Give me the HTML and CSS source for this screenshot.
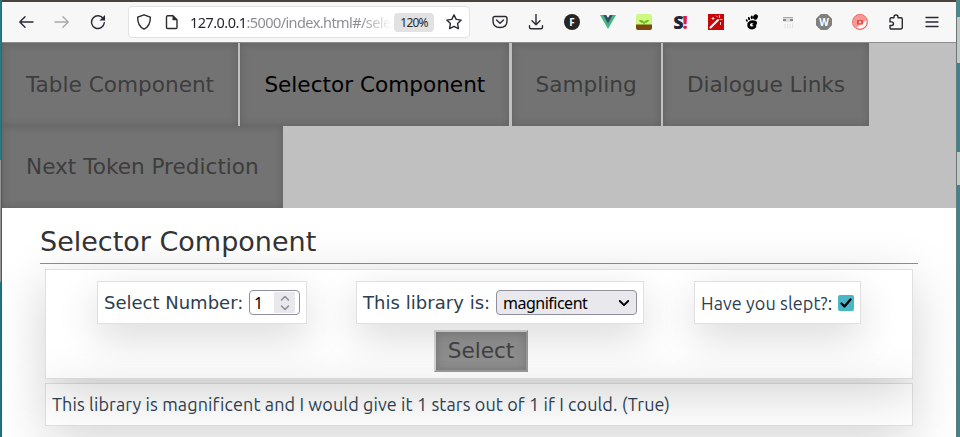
FILE: index.html
```html
<!DOCTYPE html>
<html lang="en">
<head>
<meta charset="utf-8">
<title>Selector Component</title>
<link rel="stylesheet" href="styles.css">
</head>
<body>
<div class="edge edge-left"></div>
<div class="window">
  <header class="toolbar">
    <div class="history">
      <svg width="16" height="16" viewBox="0 0 16 16"><path d="M15 8H2M7 2.800L1.800 8 7 13.200"/></svg>
      <svg class="dim" width="16" height="16" viewBox="0 0 16 16"><path d="M1 8h13M9 2.800L14.200 8 9 13.200"/></svg>
      <svg width="16" height="16" viewBox="0 0 16 16"><path d="M13.400 4.800A6.400 6.400 0 1 0 14.300 8.800"/><path class="solid" d="M15 1v5.500H9.500z"/></svg>
    </div>
    <div class="address">
      <svg class="shield" width="16" height="16" viewBox="0 0 16 16"><path d="M8 .8L14.300 3.200C14.500 8.500 12.600 12.800 8 15.200 3.400 12.800 1.500 8.500 1.700 3.200z"/></svg>
      <svg class="page-icon" width="16" height="16" viewBox="0 0 16 16"><path d="M3.500 1.700h5.500l4 4v7.600q0 1.200-1.200 1.200H3.700q-1.200 0-1.200-1.200V2.900q0-1.200 1.200-1.200z"/><path class="solid" d="M8.500 1.500v4.800h4.800z"/></svg>
      <div class="url"><b>127.0.0.1</b>:5000/index.html#/sele</div>
      <span class="zoom">120%</span>
      <svg class="star" width="16" height="16" viewBox="0 0 16 16"><path d="M8 .9l2.200 4.500 5 .7-3.600 3.500.8 5L8 12.300l-4.400 2.300.8-5L.8 6.100l5-.7z"/></svg>
    </div>
    <div class="extensions">
      <svg width="16" height="16" viewBox="0 0 16 16"><path d="M3 2.500h10q2 0 2 2V7q0 6.500-7 6.500T1 7V4.500q0-2 2-2z"/><path d="M4.500 6L8 9.300 11.500 6"/></svg>
      <svg width="16" height="16" viewBox="0 0 16 16"><path d="M8 .5v10M4 6.800l4 4 4-4M1.500 11.800v1.500q0 1.500 1.500 1.500h10q1.500 0 1.500-1.500v-1.500"/></svg>
      <span class="disc">F</span>
      <svg width="16" height="16" viewBox="0 0 16 16"><path fill="#41b883" stroke="none" d="M0 1h3.500L8 8.700 12.500 1H16L8 15z"/><path fill="#34495e" stroke="none" d="M3.200 1h3L8 4.100 9.800 1h3L8 9.400z"/></svg>
      <svg width="16" height="16" viewBox="0 0 16 16"><rect width="16" height="16" rx="2" fill="#cdf982" stroke="none"/><path fill="#7b4813" stroke="none" d="M0 10.500h16V14q0 2-2 2H2q-2 0-2-2z"/><path fill="#69b51c" stroke="none" d="M3 6q4-.5 5 2 2-2.500 5-2-1 3-4.300 2.800V11H7.300V8.800Q4 9 3 6z"/></svg>
      <span class="script">S<i>!</i></span>
      <svg width="16" height="16" viewBox="0 0 16 16"><rect width="16" height="16" fill="#c80808" stroke="none"/><path stroke="#fff" stroke-width="2" d="M2.500 13.500l7.500-7.500"/><path stroke="#ffd6d6" stroke-width="1" d="M5 3.500v2M4 4.500h2M11.500 1.500v2M12.500 8.500v2M12 5.500h2M9 2.500l-.5-.5"/></svg>
      <svg width="16" height="16" viewBox="0 0 16 16"><g fill="#000" stroke="none"><ellipse cx="11.500" cy="3" rx="2.300" ry="2.800" transform="rotate(25 11.500 3)"/><ellipse cx="7.800" cy="3.300" rx="1.100" ry="1.900"/><ellipse cx="5" cy="4.600" rx="1" ry="1.600" transform="rotate(-20 5 4.600)"/><ellipse cx="2.800" cy="6.500" rx=".9" ry="1.300" transform="rotate(-30 2.800 6.500)"/></g><path stroke="#000" stroke-width="2.800" d="M9.700 10.300q3-.5 1.500-2.300Q7 6.700 4.800 9.500 4 14 8 14q2.500-.2 3-1.800"/></svg>
      <svg width="16" height="16" viewBox="0 0 16 16"><g stroke="none"><path fill="#aaa" d="M3 3h10v1H3z"/><path fill="#ddd" d="M3 4h10v4H3z"/><path fill="#888" d="M3 5h3v2H3zM10 5h3v2h-3z"/></g><path stroke="#e2e2e2" stroke-width="1" d="M5 10v4M7.500 10v4M10 10v4M12.500 10v4"/></svg>
      <span class="octagon">W</span>
      <svg width="16" height="16" viewBox="0 0 16 16"><circle cx="8" cy="8" r="7.300" fill="#fff" stroke="#ee5b56" stroke-width="1.200"/><path fill="#f49a96" stroke="none" d="M1 8a7 7 0 0 1 13.500-2.500L10 10 4 14Q1 12 1 8z"/><path fill="#ec5049" stroke="none" d="M5 6h6v4.500H5z"/><circle cx="8" cy="8.200" r="1" fill="#fff" stroke="none"/></svg>
      <svg width="16" height="16" viewBox="0 0 16 16"><path d="M2 5.200q0-1.400 1.400-1.400H6V3q0-2 2-2t2 2v.8h3q1.300 0 1.300 1.400v8.400q0 1.400-1.300 1.400H3.400Q2 15 2 13.600V11.500h1.500q2 0 2-1.800t-2-1.800H2z"/></svg>
      <svg width="16" height="16" viewBox="0 0 16 16"><path d="M2 3.500h12M2 8h12M2 12.500h12"/></svg>
    </div>
  </header>
  <nav class="tabs">
    <a class="tab">Table Component</a>
    <a class="tab active">Selector Component</a>
    <a class="tab">Sampling</a>
    <a class="tab">Dialogue Links</a>
    <a class="tab last">Next Token Prediction</a>
  </nav>
  <main class="content">
    <h1>Selector Component</h1>
    <section class="card form">
      <div class="fields">
        <label class="card field">Select Number:
          <span class="number">1<span class="spinner"><svg width="12" height="18" viewBox="0 0 12 18"><path d="M2.500 6L6 2.500 9.500 6M2.500 12L6 15.500 9.500 12"/></svg></span></span>
        </label>
        <label class="card field library">This library is:
          <span class="select">magnificent<svg width="12" height="12" viewBox="0 0 12 12"><path d="M1.800 4L6 8.200 10.200 4"/></svg></span>
        </label>
        <label class="card field humanist">Have you slept?:
          <span class="check"><svg width="16" height="16" viewBox="0 0 16 16"><path d="M3.500 8.500l3 3L12.500 4.500"/></svg></span>
        </label>
      </div>
      <button class="submit">Select</button>
    </section>
    <section class="card result"><span>This library is magnificent and I would give it 1 stars out of 1 if I could. (True)</span></section>
  </main>
</div>
<div class="edge edge-right"></div>
</body>
</html>
```
FILE: styles.css
```css
* { box-sizing: border-box; }
body { margin: 0; width: 960px; height: 437px; overflow: hidden; display: flex; background: #fff; font-family: "DejaVu Sans", sans-serif; }
svg { display: block; flex: none; fill: none; stroke: #2b2a33; stroke-width: 1.4; stroke-linecap: round; stroke-linejoin: round; }
.solid { fill: #2b2a33; stroke: none; }
.edge { flex: none; height: 437px; }
.edge-left { width: 2px; background: linear-gradient(#257b86 160px, #969696 160px 282px, #1e727d 282px); border-right: 1px solid #33646b; }
.edge-right { width: 4px; border-left: 1px solid #68787a; background: linear-gradient(#389099 17px, #c8c6c3 17px 63px, #35888f 63px 152px, #c8c6c3 152px 185px, #35888f 185px); }
.window { width: 954px; height: 437px; overflow: hidden; border-top: 2px solid #4b423d; }

.toolbar { height: 41px; display: flex; align-items: center; background: #f7f7f7; border-bottom: 1px solid #8c8c8c; padding: 0 16px; }
.history { display: flex; flex: none; gap: 20px; width: 110px; }
.dim { opacity: .38; }
.address { width: 342px; height: 32px; flex: none; display: flex; align-items: center; padding: 0 7px; background: #fff; border: 1px solid #e2e2e2; border-radius: 4px; }
.page-icon { margin-left: 12px; }
.url { width: 200px; margin-left: 10px; flex: none; white-space: nowrap; font: 14.500px "Noto Sans", sans-serif; letter-spacing: -.58px; color: #8e8e92; -webkit-mask-image: linear-gradient(90deg, #000 170px, transparent 202px); mask-image: linear-gradient(90deg, #000 170px, transparent 202px); }
.url b { font-weight: 400; color: #25242b; letter-spacing: -.55px; }
.zoom { width: 40px; height: 19px; margin-left: 4px; background: #e2e2e2; border-radius: 4px; font: 12px/19px "Noto Sans", sans-serif; letter-spacing: -.8px; color: #2b2a33; text-align: center; flex: none; }
.star { margin-left: 12px; }
.extensions { display: flex; flex: none; gap: 20px; margin-left: 22px; }
.disc, .octagon, .script { width: 16px; height: 16px; color: #fff; font: 700 10px/16px "Open Sans", sans-serif; text-align: center; }
.disc { background: #252525; border-radius: 50%; }
.octagon { background: #808080; clip-path: polygon(30% 0, 70% 0, 100% 30%, 100% 70%, 70% 100%, 30% 100%, 0 70%, 0 30%); }
.script { color: #20243b; font-size: 18px; font-weight: 800; letter-spacing: -1px; white-space: nowrap; }
.script i { color: #dc1f35; font-style: normal; }

.tabs { height: 165px; display: flex; flex-wrap: wrap; align-content: flex-start; column-gap: 2.300px; background: #c0c0c0; }
.tab { height: 82.500px; padding: 0 24px; color: #3d3d3d; background: #737373; font-size: 21.600px; line-height: 83px; white-space: nowrap; box-shadow: inset 0 0 10px rgba(0,0,0,.17); }
.tab.active { color: #000; }
.tab.last { line-height: 81px; }

.content { padding: 16px 38px 0; }
h1 { height: 40px; margin: 0 0 5px; border-bottom: 1px solid #8c8f8d; color: #333; font-size: 27px; font-weight: 400; line-height: 35px; }
.card { border: 1px solid rgba(0,0,0,.12); background-clip: padding-box; box-shadow: 0 14px 54px rgba(0,0,0,.18); }
.form { height: 110px; margin: 0 5px 4px; padding-top: 11px; }
.fields { display: flex; gap: 49px; padding-left: 51px; }
.field { height: 43px; display: flex; align-items: center; justify-content: space-between; padding: 0 6px; background: #fff; color: #2c3e50; font-size: 18px; white-space: nowrap; width: 210px; box-shadow: 0 14px 40px rgba(0,0,0,.15); }
.library { width: 288px; letter-spacing: .04px; }
.humanist, .result { font-family: Ubuntu, "Noto Sans", sans-serif; letter-spacing: .1px; }
.humanist { width: 167px; margin-left: 1px; }
.number { display: flex; align-items: center; width: 51px; height: 25px; padding-left: 4px; border: 1px solid #8f8f9d; border-radius: 4px; background: #fff; color: #000; font: 16px "Noto Sans", sans-serif; }
.spinner { display: grid; place-items: center; width: 21px; height: 21px; margin: 0 4px 0 auto; background: #e9e9ed; }
.spinner svg { stroke: #8f8f9d; stroke-width: 1.600; }
.select { display: flex; align-items: center; justify-content: space-between; width: 141px; height: 25px; padding: 0 6px; border: 1px solid #8f8f9d; border-radius: 4px; background: #e9e9ed; color: #000; font: 16px "Noto Sans", sans-serif; letter-spacing: -.5px; }
.select svg { stroke: #000; stroke-width: 1.900; }
.check { width: 16px; height: 16px; border-radius: 2px; background: #48b7c8; }
.check svg { stroke: #000; stroke-width: 2.300; }
.submit { display: block; width: 94px; height: 42px; margin: 6px 0 0 388px; padding: 0 0 2px; border: 2px solid; border-color: #d8d8d8 #9c9c9c #9c9c9c #d8d8d8; border-radius: 0; background: #929292; color: #404040; font: 21.600px "DejaVu Sans", sans-serif; box-shadow: inset 0 0 10px rgba(0,0,0,.17); }
.result { height: 43px; margin: 0 5px; padding: 0 6px; color: #2c3e50; font-size: 18px; line-height: 41px; white-space: nowrap; }
```
